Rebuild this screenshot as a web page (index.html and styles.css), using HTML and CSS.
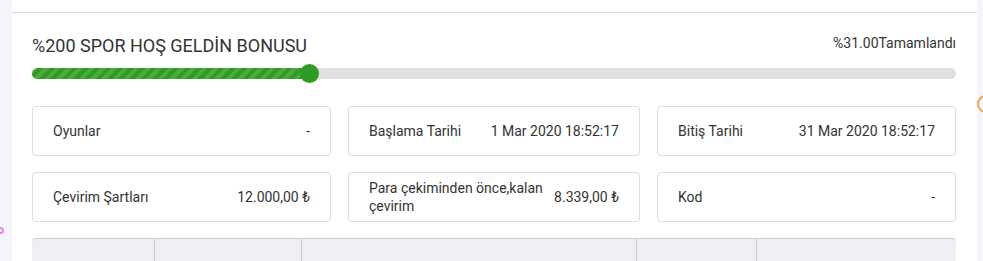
FILE: index.html
```html
<!DOCTYPE html>
<html lang="tr">
<head>
    <meta charset="UTF-8">
    <meta name="viewport" content="width=device-width, initial-scale=1.0">
    <title>Bonus Detayı</title>
    <link rel="stylesheet" href="styles.css">
</head>
<body>
    <div class="page">
        <div class="side side-left">
            <span class="ring ring-pink"></span>
        </div>

        <div class="panel">
            <div class="panel-top"></div>

            <div class="bonus">
                <div class="bonus-head">
                    <h2>%200 SPOR HOŞ GELDİN BONUSU</h2>
                    <span class="bonus-status">%31.00Tamamlandı</span>
                </div>

                <div class="progress">
                    <div class="progress-fill" style="width: 30.1%">
                        <span class="progress-knob"></span>
                    </div>
                </div>

                <div class="info-grid">
                    <div class="info-card">
                        <span class="info-label">Oyunlar</span>
                        <span class="info-value">-</span>
                    </div>
                    <div class="info-card">
                        <span class="info-label">Başlama Tarihi</span>
                        <span class="info-value">1 Mar 2020 18:52:17</span>
                    </div>
                    <div class="info-card">
                        <span class="info-label">Bitiş Tarihi</span>
                        <span class="info-value">31 Mar 2020 18:52:17</span>
                    </div>
                    <div class="info-card">
                        <span class="info-label">Çevirim Şartları</span>
                        <span class="info-value">12.000,00 ₺</span>
                    </div>
                    <div class="info-card">
                        <span class="info-label">Para çekiminden önce,kalan çevirim</span>
                        <span class="info-value">8.339,00 ₺</span>
                    </div>
                    <div class="info-card">
                        <span class="info-label">Kod</span>
                        <span class="info-value">-</span>
                    </div>
                </div>

                <div class="table-head">
                    <div class="th th-1"></div>
                    <div class="th th-2"></div>
                    <div class="th th-3"></div>
                    <div class="th th-4"></div>
                    <div class="th th-5"></div>
                </div>
            </div>
        </div>

        <div class="side side-right">
            <span class="ring ring-orange"></span>
        </div>
    </div>
</body>
</html>
```

FILE: styles.css
```css
body, html {
    margin: 0;
    padding: 0;
    height: 100%;
    overflow: hidden;
    font-family: Roboto, "Liberation Sans", Arial, sans-serif;
}

body {
    color: #333;
    background: #f4f5f9;
}

.page {
    display: flex;
    height: 100%;
}

.side {
    position: relative;
    background: #f4f5f9;
}

.side-left {
    width: 12px;
}

.side-right {
    width: 6px;
    overflow: hidden;
}

/* little decorative rings peeking in at the edges */
.ring {
    position: absolute;
    border-radius: 50%;
    box-sizing: border-box;
}

.ring-pink {
    left: -3px;
    top: 227px;
    width: 7px;
    height: 7px;
    border: 2px solid #e58ae8;
}

.ring-orange {
    left: 0;
    top: 95px;
    width: 18px;
    height: 18px;
    border: 2px solid #f0a24e;
}

.panel {
    flex: 1;
    background: #fff;
    overflow: hidden;
}

.panel-top {
    height: 12px;
    border-bottom: 1px solid #dcdcdc;
}

.bonus {
    padding: 20px 21px 0 20px;
}

    .bonus-head {
        display: flex;
        justify-content: space-between;
        align-items: flex-start;
        height: 35px;
    }

        .bonus-head h2 {
            margin: 0;
            font-size: 18px;
            font-weight: 400;
            line-height: 26px;
            color: #333;
        }

    .bonus-status {
        font-size: 14px;
        line-height: 20px;
    }

.progress {
    position: relative;
    height: 11px;
    border-radius: 6px;
    background: #e0e0e0;
}

.progress-fill {
    position: relative;
    height: 100%;
    border-radius: 6px;
    background-color: #2e9b22;
    background-image: repeating-linear-gradient(-45deg, rgba(255, 255, 255, 0.15) 0, rgba(255, 255, 255, 0.15) 4px, transparent 4px, transparent 8px);
}

.progress-knob {
    position: absolute;
    right: -9px;
    top: -4px;
    width: 19px;
    height: 19px;
    border-radius: 50%;
    background: #2e9b22;
}

.info-grid {
    display: grid;
    grid-template-columns: 299px 292px 299px;
    gap: 16px 17px;
    margin-top: 27px;
}

.info-card {
    display: flex;
    justify-content: space-between;
    align-items: center;
    gap: 8px;
    height: 48px;
    padding: 0 20px;
    border: 1px solid #dddddd;
    border-radius: 4px;
    font-size: 14px;
    line-height: 18px;
}

.info-value {
    white-space: nowrap;
}

.table-head {
    display: flex;
    height: 40px;
    margin-top: 16px;
    background: #eeeef4;
    border-top: 1px solid #cccccc;
    border-radius: 3px 3px 0 0;
}

    .table-head .th {
        border-right: 1px solid #cccccc;
    }

.th-1 { width: 122px; }
.th-2 { width: 146px; }
.th-3 { width: 334px; }
.th-4 { width: 119px; }
.th-5 { flex: 1; border-right: none !important; }
```
